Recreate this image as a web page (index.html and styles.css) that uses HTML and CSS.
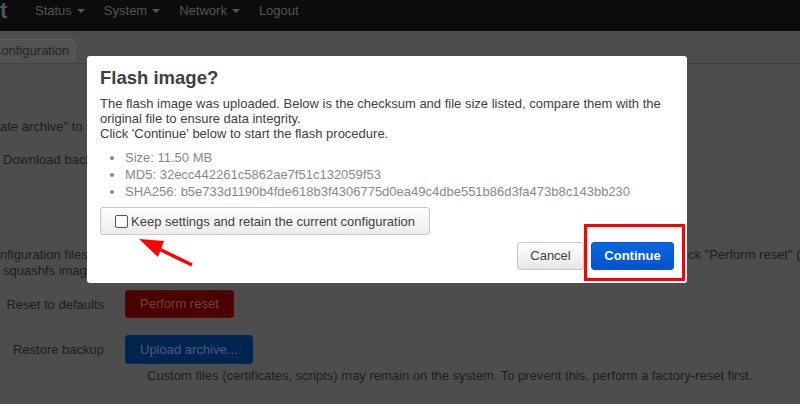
FILE: index.html
```html
<!DOCTYPE html>
<html>
<head>
<meta charset="utf-8">
<link rel="stylesheet" href="styles.css">
</head>
<body>
<div class="page">
  <header class="navbar">
    <span class="brand">t</span>
    <nav class="menu">
      <span class="menu-item">Status <span class="caret"></span></span>
      <span class="menu-item">System <span class="caret"></span></span>
      <span class="menu-item">Network <span class="caret"></span></span>
      <span class="menu-item">Logout</span>
    </nav>
  </header>
  <div class="tabs">
    <span class="tab"><span class="tab-text">Configuration</span></span>
  </div>
  <main class="content">
    <p class="line l1">ate archive" to download a tar archive of the current configuration files.</p>
    <div class="line l2">Download backup</div>
    <div class="split l3">
      <span class="cut">nfiguration files to their initial state, click</span>
      <span class="tail">ck "Perform reset" (only possible with</span>
    </div>
    <div class="line l4">squashfs images).</div>
    <div class="row r1">
      <span class="label">Reset to defaults</span>
      <span class="btn btn-red">Perform reset</span>
    </div>
    <div class="row r2">
      <span class="label">Restore backup</span>
      <span class="btn btn-blue">Upload archive...</span>
    </div>
    <p class="note">Custom files (certificates, scripts) may remain on the system. To prevent this, perform a factory-reset first.</p>
  </main>

  <div class="modal">
    <h4 class="modal-title">Flash image?</h4>
    <p class="modal-text">The flash image was uploaded. Below is the checksum and file size listed, compare them with the original file to ensure data integrity.<br>Click 'Continue' below to start the flash procedure.</p>
    <ul class="sums">
      <li>Size: 11.50 MB</li>
      <li>MD5: 32ecc442261c5862ae7f51c132059f53</li>
      <li>SHA256: b5e733d1190b4fde618b3f4306775d0ea49c4dbe551b86d3fa473b8c143bb230</li>
    </ul>
    <label class="keep"><span class="box"></span>Keep settings and retain the current configuration</label>
    <div class="actions">
      <span class="abtn cancel">Cancel</span>
      <span class="abtn go">Continue</span>
    </div>
  </div>

  <div class="highlight"></div>
  <svg class="arrow" width="70" height="40" viewBox="0 0 70 40">
    <line x1="53" y1="28" x2="18" y2="11" stroke="#f00" stroke-width="3.5"/>
    <polygon points="0,2 25,4 19,20" fill="#f00"/>
  </svg>
</div>
</body>
</html>
```

FILE: styles.css
```css
html, body {
  margin: 0;
  padding: 0;
}
body {
  width: 800px;
  height: 404px;
  overflow: hidden;
  background: #4d4d4d;
  font-family: "Liberation Sans", Arial, sans-serif;
}
.page {
  position: relative;
  width: 800px;
  height: 404px;
  overflow: hidden;
}
.navbar {
  height: 31px;
  background: #0c0c0c;
  display: flex;
  align-items: flex-start;
  color: #555;
}
.brand {
  font-size: 22px;
  font-weight: bold;
  width: 35px;
  line-height: 22px;
}
.menu {
  display: flex;
  gap: 19px;
  font-size: 13px;
  line-height: 16px;
  padding-top: 3px;
}
.menu-item {
  display: inline-flex;
  align-items: center;
  gap: 5px;
}
.caret {
  width: 0;
  height: 0;
  border-left: 4px solid transparent;
  border-right: 4px solid transparent;
  border-top: 4px solid #555;
}
.tabs {
  height: 32px;
  border-bottom: 1px solid #434343;
  display: flex;
  align-items: flex-end;
}
.tab {
  display: block;
  height: 23px;
  line-height: 22px;
  width: 74px;
  background: #525252;
  border: 1px solid #5a5a5a;
  border-bottom: none;
  border-left: none;
  border-radius: 0 4px 0 0;
  font-size: 13px;
  color: #262626;
  overflow: hidden;
  white-space: nowrap;
}
.tab-text {
  display: block;
  margin-left: -8px;
}
.content {
  color: #1e1e1e;
  font-size: 13px;
}
.line, .split {
  margin: 0;
  white-space: nowrap;
}
.l1 {
  margin-top: 55px;
}
.l2 {
  margin-top: 18px;
  padding-left: 3px;
}
.split {
  margin-top: 80px;
  display: grid;
  grid-template-columns: 688px auto;
  overflow: hidden;
}
.cut { overflow: hidden; }
.l4 {
  padding-left: 3px;
  margin-top: 1px;
}
.row {
  display: flex;
  align-items: center;
  gap: 21px;
}
.r1 { margin-top: 12px; }
.r2 { margin-top: 17px; }
.label {
  width: 104px;
  text-align: right;
}
.btn {
  display: inline-block;
  height: 26px;
  line-height: 26px;
  padding: 0 14px;
  border-radius: 3px;
  font-size: 13px;
}
.btn-red {
  background: #4a0000;
  border: 1px solid #580808;
  color: #6e4040;
}
.btn-blue {
  background: #00234f;
  border: 1px solid #002a5c;
  color: #4d5d7c;
  height: 27px;
  line-height: 27px;
}
.note {
  margin: 4px 0 0 147px;
  white-space: nowrap;
}

.modal {
  position: absolute;
  left: 87px;
  top: 56px;
  width: 574px;
  padding: 12px 13px 13px;
  background: #fff;
  border-radius: 3px;
  color: #404040;
  font-size: 13px;
}
.modal-title {
  margin: 0 0 8px;
  font-size: 18.5px;
  font-weight: bold;
  color: #404040;
  line-height: 20px;
}
.modal-text {
  margin: 0;
  line-height: 15px;
}
.sums {
  margin: 8px 0 0;
  padding-left: 25px;
  color: #888;
  line-height: 17px;
}
.keep {
  margin-top: 7px;
  display: flex;
  align-items: center;
  width: 306px;
  height: 26px;
  padding: 0 8px 0 14px;
  border: 1px solid #c8c8c8;
  border-radius: 3px;
  background: linear-gradient(#fff, #ececec);
  color: #404040;
}
.box {
  width: 11px;
  height: 11px;
  border: 1px solid #555;
  border-radius: 2px;
  background: #fff;
  margin-right: 3px;
}
.actions {
  margin-top: 7px;
  display: flex;
  justify-content: flex-end;
  gap: 7px;
}
.abtn {
  display: inline-block;
  height: 26px;
  line-height: 26px;
  border-radius: 3px;
  text-align: center;
}
.cancel {
  width: 65px;
  border: 1px solid #c8c8c8;
  background: linear-gradient(#fff, #e6e6e6);
  color: #404040;
}
.go {
  width: 81px;
  border: 1px solid #0b57c7;
  background: linear-gradient(#0a67e3, #0552cc);
  color: #fff;
  font-weight: bold;
}
.highlight {
  position: absolute;
  left: 584px;
  top: 224px;
  width: 95px;
  height: 51px;
  border: 3px solid #f00;
}
.arrow {
  position: absolute;
  left: 139px;
  top: 237px;
}
```
